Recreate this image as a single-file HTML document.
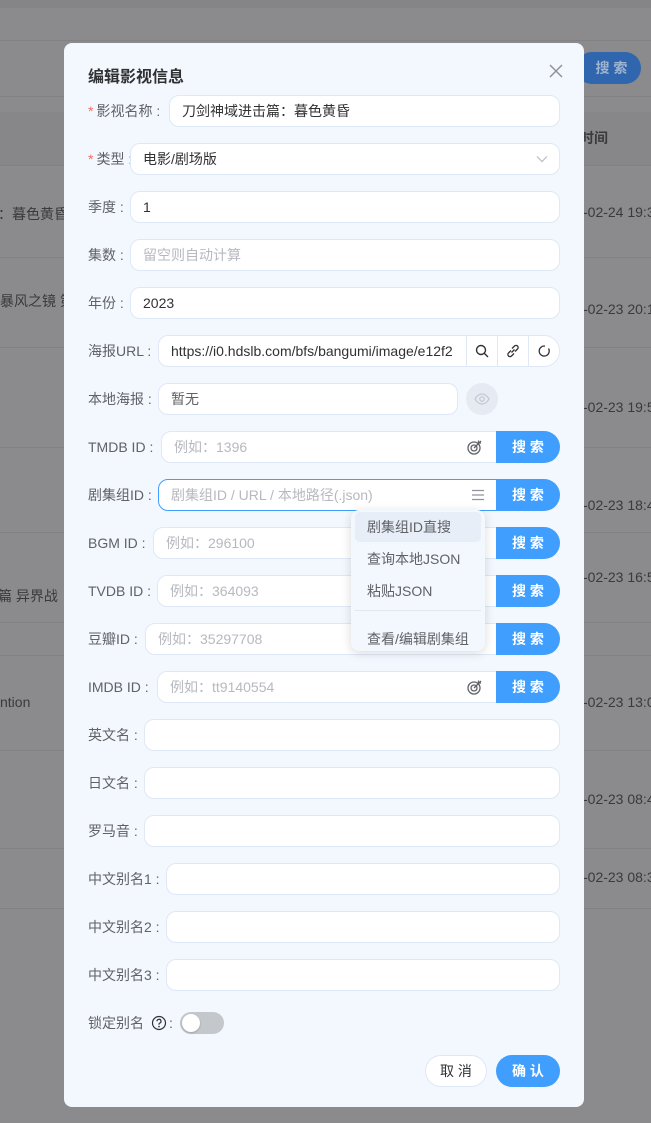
<!DOCTYPE html>
<html><head><meta charset="utf-8">
<style>
*{box-sizing:border-box;margin:0;padding:0}
body{width:651px;height:1123px;overflow:hidden;background:#8b8b8d;font-family:"Liberation Sans","Noto Sans CJK SC",sans-serif;position:relative;font-size:14px}
.a{position:absolute}
.bgt{position:absolute;color:#3a3a3c;font-size:14px;white-space:nowrap}
.hl{position:absolute;left:0;width:651px;height:1px;background:#828285}
.dlg{position:absolute;left:64px;top:43px;width:520px;height:1064px;background:#f3f7fe;border-radius:8px}
.lab{position:absolute;left:88px;color:#606266;font-size:14px;line-height:20px;white-space:nowrap}
.req{color:#f56c6c;margin-right:3px}
.inp{position:absolute;height:32px;background:#fff;border:1px solid #dfe8f6;border-radius:10px;color:#303133;font-size:14px;line-height:30px;padding-left:12px;white-space:nowrap;overflow:hidden}
.ph{color:#b6b9bf}
.btn{position:absolute;left:496px;width:64px;height:32px;background:#409eff;color:#fff;border-radius:0 16px 16px 0;text-align:center;line-height:32px;font-weight:bold;letter-spacing:0px;font-size:14px}
.lb{border-radius:10px 0 0 10px}
svg{display:block}
</style></head><body>
<div class="a" style="left:0;top:0;width:651px;height:8px;background:#858587"></div>
<div class="hl" style="top:40px"></div>
<div class="hl" style="top:96px"></div>
<div class="a" style="left:0;top:112px;width:651px;height:53px;background:#878789"></div>
<div class="hl" style="top:165px"></div>
<div class="hl" style="top:257px"></div>
<div class="hl" style="top:347px"></div>
<div class="hl" style="top:447px"></div>
<div class="hl" style="top:532px"></div>
<div class="hl" style="top:622px"></div>
<div class="hl" style="top:655px"></div>
<div class="hl" style="top:750px"></div>
<div class="hl" style="top:848px"></div>
<div class="hl" style="top:908px"></div>
<div class="bgt" style="left:-2px;top:204px">：暮色黄昏</div>
<div class="bgt" style="left:0;top:291px">暴风之镜 第</div>
<div class="bgt" style="left:-2px;top:586px">篇 异界战</div>
<div class="bgt" style="left:0;top:694px">ntion</div>
<div class="bgt" style="left:580px;top:128px;font-weight:bold">时间</div>
<div class="a" style="left:576px;top:52px;width:65px;height:32px;border-radius:16px;background:#2f66ad;color:#9fb4d0;text-align:center;line-height:32px;font-weight:bold;padding-left:6px">搜 索</div>
<div class="bgt" style="left:583px;top:204px">-02-24 19:3</div>
<div class="bgt" style="left:583px;top:301px">-02-23 20:1</div>
<div class="bgt" style="left:583px;top:399px">-02-23 19:5</div>
<div class="bgt" style="left:583px;top:497px">-02-23 18:4</div>
<div class="bgt" style="left:583px;top:569px">-02-23 16:5</div>
<div class="bgt" style="left:583px;top:694px">-02-23 13:0</div>
<div class="bgt" style="left:583px;top:791px">-02-23 08:4</div>
<div class="bgt" style="left:583px;top:869px">-02-23 08:3</div>

<div class="dlg"></div>
<div class="a" style="left:88px;top:63px;font-size:16px;font-weight:bold;color:#303133">编辑影视信息</div>
<svg class="a" style="left:548px;top:63px" width="16" height="16" viewBox="0 0 16 16"><path d="M2 2L14 14M14 2L2 14" stroke="#909399" stroke-width="1.5"/></svg>

<div class="lab" style="top:101px"><span class="req">*</span>影视名称 :</div>
<div class="inp" style="left:169px;top:95px;width:391px">刀剑神域进击篇：暮色黄昏</div>

<div class="lab" style="top:149px"><span class="req">*</span>类型 :</div>
<div class="inp" style="left:130px;top:143px;width:430px">电影/剧场版</div>
<svg class="a" style="left:536px;top:153px" width="12" height="12" viewBox="0 0 12 12"><path d="M1 3.5L6 8.5L11 3.5" stroke="#b8bcc4" stroke-width="1.2" fill="none"/></svg>

<div class="lab" style="top:197px">季度 :</div>
<div class="inp" style="left:130px;top:191px;width:430px">1</div>
<div class="lab" style="top:245px">集数 :</div>
<div class="inp" style="left:130px;top:239px;width:430px"><span class="ph">留空则自动计算</span></div>
<div class="lab" style="top:293px">年份 :</div>
<div class="inp" style="left:130px;top:287px;width:430px">2023</div>

<div class="lab" style="top:341px">海报URL :</div>
<div class="inp" style="left:158px;top:335px;width:402px;border-radius:10px 16px 16px 10px;padding-right:94px">https://i0.hdslb.com/bfs/bangumi/image/e12f2</div>
<div class="a" style="left:466px;top:336px;width:93px;height:30px;background:#fff;border-radius:0 16px 16px 0"></div>
<div class="a" style="left:466px;top:336px;width:1px;height:30px;background:#dfe8f6"></div>
<div class="a" style="left:497px;top:336px;width:1px;height:30px;background:#dfe8f6"></div>
<div class="a" style="left:528px;top:336px;width:1px;height:30px;background:#dfe8f6"></div>
<svg class="a" style="left:474px;top:343px" width="16" height="16" viewBox="0 0 16 16"><circle cx="7" cy="7" r="4.5" stroke="#303133" stroke-width="1.4" fill="none"/><path d="M10.3 10.3L14 14" stroke="#303133" stroke-width="1.4"/></svg>
<svg class="a" style="left:505px;top:343px" width="16" height="16" viewBox="0 0 16 16"><path d="M7 5.5L9.5 3a2.1 2.1 0 0 1 3 3L10 8.5M9 10.5L6.5 13a2.1 2.1 0 0 1-3-3L6 7.5M6.5 9.5l3-3" stroke="#303133" stroke-width="1.3" fill="none"/></svg>
<svg class="a" style="left:536px;top:343px" width="16" height="16" viewBox="0 0 16 16"><path d="M12.5 5.5A5 5 0 1 1 9 3.1" stroke="#303133" stroke-width="1.3" fill="none"/></svg>

<div class="lab" style="top:389px">本地海报 :</div>
<div class="inp" style="left:158px;top:383px;width:300px"><span style="color:#606266">暂无</span></div>
<div class="a" style="left:466px;top:383px;width:32px;height:32px;border-radius:16px;background:#e6ebf3"></div>
<svg class="a" style="left:474px;top:392px" width="16" height="14" viewBox="0 0 16 14"><path d="M1 7C3 3.5 5.5 2 8 2s5 1.5 7 5c-2 3.5-4.5 5-7 5S3 10.5 1 7z" stroke="#c3c7cf" stroke-width="1.2" fill="none"/><circle cx="8" cy="7" r="2.2" stroke="#c3c7cf" stroke-width="1.2" fill="none"/></svg>

<div class="lab" style="top:437px">TMDB ID :</div>
<div class="inp lb" style="left:161px;top:431px;width:336px"><span class="ph">例如：1396</span></div>
<svg class="a" style="left:466px;top:438px" width="18" height="18" viewBox="0 0 18 18"><circle cx="8" cy="10" r="6" stroke="#606266" stroke-width="1.3" fill="none"/><circle cx="8" cy="10" r="3" stroke="#606266" stroke-width="1.3" fill="none"/><path d="M8 10L15 3M12.5 2.5v2.5h2.5" stroke="#606266" stroke-width="1.3" fill="none"/></svg>
<div class="btn" style="top:431px">搜 索</div>

<div class="lab" style="top:485px">剧集组ID :</div>
<div class="inp lb" style="left:158px;top:479px;width:339px;border-color:#409eff"><span class="ph">剧集组ID / URL / 本地路径(.json)</span></div>
<svg class="a" style="left:471px;top:488px" width="14" height="14" viewBox="0 0 14 14"><path d="M1 2.5h12M1 7h12M1 11.5h12" stroke="#909399" stroke-width="1.3"/></svg>
<div class="btn" style="top:479px">搜 索</div>

<div class="lab" style="top:533px">BGM ID :</div>
<div class="inp lb" style="left:153px;top:527px;width:344px"><span class="ph">例如：296100</span></div>
<div class="btn" style="top:527px">搜 索</div>
<div class="lab" style="top:581px">TVDB ID :</div>
<div class="inp lb" style="left:157px;top:575px;width:340px"><span class="ph">例如：364093</span></div>
<div class="btn" style="top:575px">搜 索</div>
<div class="lab" style="top:629px">豆瓣ID :</div>
<div class="inp lb" style="left:145px;top:623px;width:352px"><span class="ph">例如：35297708</span></div>
<div class="btn" style="top:623px">搜 索</div>
<div class="lab" style="top:677px">IMDB ID :</div>
<div class="inp lb" style="left:157px;top:671px;width:340px"><span class="ph">例如：tt9140554</span></div>
<svg class="a" style="left:466px;top:678px" width="18" height="18" viewBox="0 0 18 18"><circle cx="8" cy="10" r="6" stroke="#606266" stroke-width="1.3" fill="none"/><circle cx="8" cy="10" r="3" stroke="#606266" stroke-width="1.3" fill="none"/><path d="M8 10L15 3M12.5 2.5v2.5h2.5" stroke="#606266" stroke-width="1.3" fill="none"/></svg>
<div class="btn" style="top:671px">搜 索</div>

<div class="a" style="left:351px;top:510px;width:134px;height:141px;background:#f3f7fe;border-radius:8px;box-shadow:0 2px 10px rgba(0,0,0,.15)"></div>
<div class="a" style="left:355px;top:512px;width:126px;height:30px;background:#e8eef8;border-radius:5px"></div>
<div class="a" style="left:367px;top:517px;color:#606266">剧集组ID直搜</div>
<div class="a" style="left:367px;top:549px;color:#606266">查询本地JSON</div>
<div class="a" style="left:367px;top:581px;color:#606266">粘贴JSON</div>
<div class="a" style="left:355px;top:610px;width:126px;height:1px;background:#e2e6ee"></div>
<div class="a" style="left:367px;top:629px;color:#606266">查看/编辑剧集组</div>

<div class="lab" style="top:725px">英文名 :</div>
<div class="inp" style="left:144px;top:719px;width:416px"></div>
<div class="lab" style="top:773px">日文名 :</div>
<div class="inp" style="left:144px;top:767px;width:416px"></div>
<div class="lab" style="top:821px">罗马音 :</div>
<div class="inp" style="left:144px;top:815px;width:416px"></div>
<div class="lab" style="top:869px">中文别名1 :</div>
<div class="inp" style="left:166px;top:863px;width:394px"></div>
<div class="lab" style="top:917px">中文别名2 :</div>
<div class="inp" style="left:166px;top:911px;width:394px"></div>
<div class="lab" style="top:965px">中文别名3 :</div>
<div class="inp" style="left:166px;top:959px;width:394px"></div>

<div class="lab" style="top:1013px">锁定别名</div>
<svg class="a" style="left:151px;top:1015px" width="16" height="16" viewBox="0 0 16 16"><circle cx="8" cy="8" r="6.5" stroke="#303133" stroke-width="1.2" fill="none"/><path d="M6 6.3a2 2 0 1 1 2.6 1.9c-.5.2-.6.5-.6 1v.6" stroke="#303133" stroke-width="1.2" fill="none"/><circle cx="8" cy="11.6" r=".8" fill="#303133"/></svg>
<div class="lab" style="left:169px;top:1013px">:</div>
<div class="a" style="left:180px;top:1012px;width:44px;height:22px;border-radius:11px;background:#c4c7cc"></div>
<div class="a" style="left:182px;top:1014px;width:18px;height:18px;border-radius:9px;background:#fff;box-shadow:0 1px 2px rgba(0,0,0,.2)"></div>

<div class="a" style="left:425px;top:1055px;width:62px;height:32px;border-radius:16px;background:#fff;border:1px solid #dfe8f6;text-align:center;line-height:30px;color:#303133">取 消</div>
<div class="a" style="left:496px;top:1055px;width:64px;height:32px;border-radius:16px;background:#409eff;text-align:center;line-height:32px;color:#fff;font-weight:bold">确 认</div>
</body></html>
